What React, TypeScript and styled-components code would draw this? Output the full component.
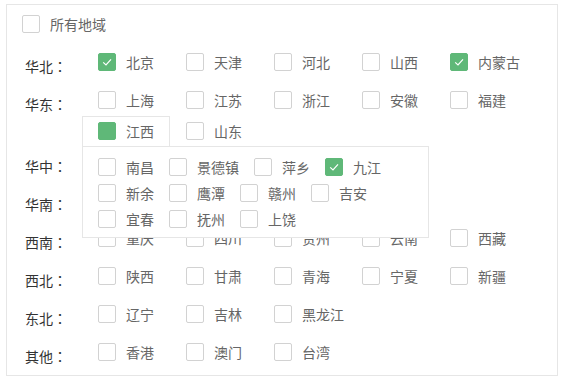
import styled, { createGlobalStyle } from "styled-components";

type Region = { name: string; items: string[] };

const regions: Region[] = [
  { name: "华北", items: ["北京", "天津", "河北", "山西", "内蒙古"] },
  { name: "华东", items: ["上海", "江苏", "浙江", "安徽", "福建", "江西", "山东"] },
  { name: "华中", items: ["河南", "湖北", "湖南"] },
  { name: "华南", items: ["广东", "广西", "海南"] },
  { name: "西南", items: ["重庆", "四川", "贵州", "云南", "西藏"] },
  { name: "西北", items: ["陕西", "甘肃", "青海", "宁夏", "新疆"] },
  { name: "东北", items: ["辽宁", "吉林", "黑龙江"] },
  { name: "其他", items: ["香港", "澳门", "台湾"] },
];

const cities = ["南昌", "景德镇", "萍乡", "九江", "新余", "鹰潭", "赣州", "吉安", "宜春", "抚州", "上饶"];

const checked = new Set(["北京", "内蒙古", "九江"]);
const half = new Set(["江西"]);
const activeProvince = "江西";

type BoxState = "off" | "on" | "half";

const GlobalStyle = createGlobalStyle`
  body {
    margin: 0;
    background: #fff;
    font-family: "Noto Sans CJK SC", "Noto Sans", sans-serif;
    font-size: 14px;
  }
`;

const Box = styled.span<{ $state: BoxState }>`
  display: inline-flex;
  align-items: center;
  justify-content: center;
  width: 18px;
  height: 18px;
  box-sizing: border-box;
  flex-shrink: 0;
  border-radius: 2px;
  border: 1px solid ${(p) => (p.$state === "off" ? "#d2d2d2" : "#5fb878")};
  background: ${(p) => (p.$state === "off" ? "#fff" : "#5fb878")};
`;

const CheckBox = ({ state }: { state: BoxState }) => (
  <Box $state={state}>
    {state === "on" && (
      <svg width="16" height="16" viewBox="0 0 16 16">
        <polyline points="4.2,8.4 7,11 12,5.4" fill="none" stroke="#fff" strokeWidth="1.2" />
      </svg>
    )}
  </Box>
);

const stateOf = (name: string): BoxState =>
  checked.has(name) ? "on" : half.has(name) ? "half" : "off";

const Panel = styled.div`
  margin: 4px 0 0 6px;
  width: 552px;
  height: 372px;
  box-sizing: border-box;
  border: 1px solid #e6e6e6;
  overflow: hidden;
`;

const AllRow = styled.div`
  display: flex;
  align-items: center;
  gap: 10px;
  height: 38px;
  padding-left: 15px;
  margin-bottom: 4px;
  color: #666;
`;

const RegionRow = styled.div`
  display: flex;
  min-height: 38px;
  padding-left: 18px;
`;

const Label = styled.div`
  width: 57px;
  flex-shrink: 0;
  line-height: 38px;
  color: #333;
`;

const Colon = styled.span`
  font-family: "Noto Sans CJK TC", "Noto Sans CJK SC", sans-serif;
`;

const Items = styled.div`
  flex: 1;
  display: flex;
  flex-wrap: wrap;
  align-content: flex-start;
`;

const Cell = styled.div<{ $active?: boolean }>`
  position: relative;
  display: flex;
  align-items: flex-start;
  gap: 10px;
  width: 88px;
  height: 31px;
  box-sizing: border-box;
  line-height: 18px;
  color: #666;
  padding: ${(p) => (p.$active ? "5px 0 0 15px" : "6px 0 0 16px")};
  border: ${(p) => (p.$active ? "1px solid #e6e6e6" : "none")};
  background: #fff;
  z-index: ${(p) => (p.$active ? 2 : "auto")};
`;

const Dropdown = styled.div`
  position: absolute;
  top: 100%;
  left: -1px;
  width: 347px;
  box-sizing: border-box;
  padding: 7px 15px 5px;
  border: 1px solid #e6e6e6;
  background: #fff;
  display: flex;
  flex-wrap: wrap;
`;

const City = styled.div`
  display: flex;
  align-items: center;
  gap: 10px;
  height: 26px;
  margin-right: 15px;
  color: #666;
  line-height: 18px;
`;

export default function App() {
  return (
    <>
      <GlobalStyle />
      <Panel>
        <AllRow>
          <CheckBox state="off" />
          <span>所有地域</span>
        </AllRow>
        {regions.map((r) => (
          <RegionRow key={r.name}>
            <Label>
              {r.name}
              <Colon>：</Colon>
            </Label>
            <Items>
              {r.items.map((p) => (
                <Cell key={p} $active={p === activeProvince}>
                  <CheckBox state={stateOf(p)} />
                  <span>{p}</span>
                  {p === activeProvince && (
                    <Dropdown>
                      {cities.map((c) => (
                        <City key={c}>
                          <CheckBox state={stateOf(c)} />
                          <span>{c}</span>
                        </City>
                      ))}
                    </Dropdown>
                  )}
                </Cell>
              ))}
            </Items>
          </RegionRow>
        ))}
      </Panel>
    </>
  );
}
